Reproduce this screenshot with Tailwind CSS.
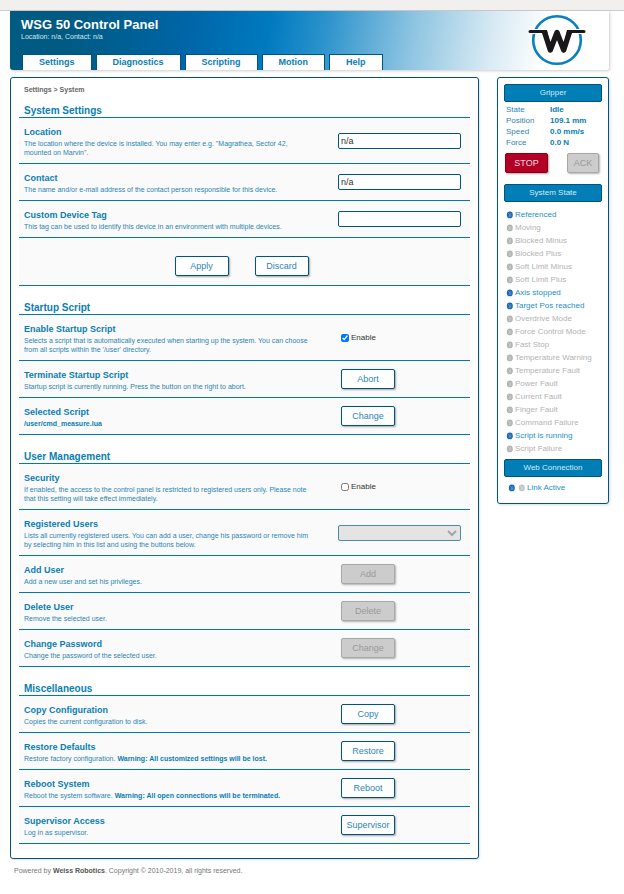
<!DOCTYPE html>
<html lang="en">
<head>
<meta charset="utf-8">
<title>WSG 50 Control Panel</title>
<script src="https://cdn.jsdelivr.net/npm/@tailwindcss/browser@4"></script>
</head>
<body class="bg-white font-['Liberation_Sans',Arial,sans-serif] text-[7px] leading-[9px] text-[#2b85b5]">
<svg class="hidden">
  <symbol id="dot" viewBox="0 0 7 8">
    <ellipse cx="3.8" cy="3.9" rx="3" ry="3.4" fill="currentColor"/>
    <path d="M2.200 2.200L4.200 4L2.800 6" fill="none" stroke="#fff" stroke-opacity=".4" stroke-width=".9"/>
    <path d="M4.8 1.8V6.2" fill="none" stroke="#fff" stroke-opacity=".3" stroke-width=".7"/>
  </symbol>
</svg>
<div class="h-[11px] border-b border-[#cfcdcb] bg-[#f2f0ee]"></div>
<div class="pl-[10px] pr-[15px]">
  <header class="flex h-[59px] justify-between rounded-b-[3px] bg-[linear-gradient(100deg,#005a82_0%,#005a82_10%,#0066a8_30%,#007abf_43%,#2b92cc_52%,#8fc5e2_67%,#d8eaf4_80%,#ffffff_89%)] shadow-[1px_1px_3px_rgba(0,0,0,0.2)]">
    <div class="flex flex-col justify-between pl-[11px]">
      <div class="pt-[6px] text-white">
        <h1 class="text-[13px] leading-[15px] font-bold">WSG 50 Control Panel</h1>
        <p class="text-[#d5e6f0]">Location: n/a, Contact: n/a</p>
      </div>
      <nav class="flex gap-1 pl-[1px] text-[9px] leading-[15px] font-bold text-[#0a7db4]">
        <a href="#" class="border-t border-r border-l border-[#005580] bg-white px-4">Settings</a>
        <a href="#" class="border-t border-r border-l border-[#005580] bg-white px-4">Diagnostics</a>
        <a href="#" class="border-t border-r border-l border-[#005580] bg-white px-4">Scripting</a>
        <a href="#" class="border-t border-r border-l border-[#005580] bg-white px-4">Motion</a>
        <a href="#" class="border-t border-r border-l border-[#005580] bg-white px-4">Help</a>
      </nav>
    </div>
    <svg class="mt-[3px] mr-[22px] h-[52px] w-[60px]" viewBox="0 0 60 52" aria-label="Weiss Robotics">
      <circle cx="30" cy="26" r="23.8" fill="none" stroke="#0a80c0" stroke-width="2.6"/>
      <path d="M2 17.5H58" stroke="#fff" stroke-width="5"/>
      <path d="M3 17.5H18M42 17.5H57" stroke="#1a171b" stroke-width="3" stroke-linecap="round"/>
      <path d="M17.500 18L23.3 36L30 18.500L36.700 36L42.500 18" fill="none" stroke="#1a171b" stroke-width="5.4" stroke-linejoin="round"/>
      <path d="M14 16H20L24 34H22ZM46 16H40L36 34H38Z" fill="#1a171b"/>
    </svg>
  </header>

  <div class="mt-[7px] flex items-start gap-[18px]">
    <main class="min-w-0 flex-1 rounded-[3px] border border-[#005580] bg-white px-2 pb-[14px] shadow-[1px_1px_2px_rgba(0,0,0,0.12)]">
      <p class="pt-[7px] pl-[5px] font-bold text-[#666]">Settings &gt; System</p>

      <section>
        <h2 class="mt-[10px] border-b border-[#007aad] pl-[5px] text-[10px] leading-[13px] font-bold text-[#0a7db4]">System Settings</h2>
        <div class="grid grid-cols-[1fr_132px] items-center border-b border-[#007aad] bg-[#fafafa]">
          <div class="pt-2 pr-6 pb-[6px] pl-[5px]"><h3 class="mb-px text-[9px] leading-[12px] font-bold text-[#0a7db4]"><label for="loc">Location</label></h3><p>The location where the device is installed. You may enter e.g. "Magrathea, Sector 42, mounted on Marvin".</p></div>
          <input id="loc" value="n/a" class="h-4 w-[123px] rounded-[2px] border border-[#005580] bg-white px-[2px] text-[9px] text-[#333]">
        </div>
        <div class="grid grid-cols-[1fr_132px] items-center border-b border-[#007aad] bg-[#fafafa]">
          <div class="pt-2 pr-6 pb-[6px] pl-[5px]"><h3 class="mb-px text-[9px] leading-[12px] font-bold text-[#0a7db4]"><label for="con">Contact</label></h3><p>The name and/or e-mail address of the contact person responsible for this device.</p></div>
          <input id="con" value="n/a" class="h-4 w-[123px] rounded-[2px] border border-[#005580] bg-white px-[2px] text-[9px] text-[#333]">
        </div>
        <div class="grid grid-cols-[1fr_132px] items-center border-b border-[#007aad] bg-[#fafafa]">
          <div class="pt-2 pr-6 pb-[6px] pl-[5px]"><h3 class="mb-px text-[9px] leading-[12px] font-bold text-[#0a7db4]"><label for="tag">Custom Device Tag</label></h3><p>This tag can be used to identify this device in an environment with multiple devices.</p></div>
          <input id="tag" class="h-4 w-[123px] rounded-[2px] border border-[#005580] bg-white px-[2px] text-[9px] text-[#333]">
        </div>
        <div class="flex justify-center gap-[26px] border-b border-[#007aad] bg-[#fafafa] pt-[18px] pr-[6px] pb-[9px]">
          <button class="h-5 w-[54px] rounded-[2px] border border-[#005580] bg-white text-[9px] shadow-[1px_1px_2px_rgba(0,0,0,0.35)]">Apply</button>
          <button class="h-5 w-[54px] rounded-[2px] border border-[#005580] bg-white text-[9px] shadow-[1px_1px_2px_rgba(0,0,0,0.35)]">Discard</button>
        </div>
      </section>

      <section>
        <h2 class="mt-[15px] border-b border-[#007aad] pl-[5px] text-[10px] leading-[13px] font-bold text-[#0a7db4]">Startup Script</h2>
        <div class="grid grid-cols-[1fr_132px] items-center border-b border-[#007aad] bg-[#fafafa]">
          <div class="pt-2 pr-6 pb-[6px] pl-[5px]"><h3 class="mb-px text-[9px] leading-[12px] font-bold text-[#0a7db4]">Enable Startup Script</h3><p>Selects a script that is automatically executed when starting up the system. You can choose from all scripts within the '/user' directory.</p></div>
          <label class="flex items-center gap-[2px] pl-[3px] text-[8px] text-[#333]"><input type="checkbox" checked class="size-2">Enable</label>
        </div>
        <div class="grid grid-cols-[1fr_132px] items-center border-b border-[#007aad] bg-[#fafafa]">
          <div class="pt-2 pr-6 pb-[6px] pl-[5px]"><h3 class="mb-px text-[9px] leading-[12px] font-bold text-[#0a7db4]">Terminate Startup Script</h3><p>Startup script is currently running. Press the button on the right to abort.</p></div>
          <button class="ml-[3px] h-5 w-[54px] rounded-[2px] border border-[#005580] bg-white text-[9px] shadow-[1px_1px_2px_rgba(0,0,0,0.35)]">Abort</button>
        </div>
        <div class="grid grid-cols-[1fr_132px] items-center border-b border-[#007aad] bg-[#fafafa]">
          <div class="pt-2 pr-6 pb-[6px] pl-[5px]"><h3 class="mb-px text-[9px] leading-[12px] font-bold text-[#0a7db4]">Selected Script</h3><p class="font-bold text-[#0a7db4]">/user/cmd_measure.lua</p></div>
          <button class="ml-[3px] h-5 w-[54px] rounded-[2px] border border-[#005580] bg-white text-[9px] shadow-[1px_1px_2px_rgba(0,0,0,0.35)]">Change</button>
        </div>
      </section>

      <section>
        <h2 class="mt-[15px] border-b border-[#007aad] pl-[5px] text-[10px] leading-[13px] font-bold text-[#0a7db4]">User Management</h2>
        <div class="grid grid-cols-[1fr_132px] items-center border-b border-[#007aad] bg-[#fafafa]">
          <div class="pt-2 pr-6 pb-[6px] pl-[5px]"><h3 class="mb-px text-[9px] leading-[12px] font-bold text-[#0a7db4]">Security</h3><p>If enabled, the access to the control panel is restricted to registered users only. Please note that this setting will take effect immediately.</p></div>
          <label class="flex items-center gap-[2px] pl-[3px] text-[8px] text-[#333]"><input type="checkbox" class="size-2">Enable</label>
        </div>
        <div class="grid grid-cols-[1fr_132px] items-center border-b border-[#007aad] bg-[#fafafa]">
          <div class="pt-2 pr-6 pb-[6px] pl-[5px]"><h3 class="mb-px text-[9px] leading-[12px] font-bold text-[#0a7db4]"><label for="users">Registered Users</label></h3><p>Lists all currently registered users. You can add a user, change his password or remove him by selecting him in this list and using the buttons below.</p></div>
          <div class="relative w-[123px]">
            <select id="users" disabled class="block h-4 w-full appearance-none rounded-[2px] border border-[#4c8bab] bg-[#e4e4e4] text-[9px]"></select>
            <svg class="absolute top-[5px] right-1 h-[7px] w-[10px]" viewBox="0 0 10 7"><path d="M1 1L5 5L9 1" fill="none" stroke="#a3a3a3" stroke-width="2"/></svg>
          </div>
        </div>
        <div class="grid grid-cols-[1fr_132px] items-center border-b border-[#007aad] bg-[#fafafa]">
          <div class="pt-2 pr-6 pb-[6px] pl-[5px]"><h3 class="mb-px text-[9px] leading-[12px] font-bold text-[#0a7db4]">Add User</h3><p>Add a new user and set his privileges.</p></div>
          <button disabled class="ml-[3px] h-5 w-[54px] rounded-[2px] border border-[#a8a8a8] bg-[#cccccc] text-[9px] text-[#999] shadow-[1px_1px_2px_rgba(0,0,0,0.3)]">Add</button>
        </div>
        <div class="grid grid-cols-[1fr_132px] items-center border-b border-[#007aad] bg-[#fafafa]">
          <div class="pt-2 pr-6 pb-[6px] pl-[5px]"><h3 class="mb-px text-[9px] leading-[12px] font-bold text-[#0a7db4]">Delete User</h3><p>Remove the selected user.</p></div>
          <button disabled class="ml-[3px] h-5 w-[54px] rounded-[2px] border border-[#a8a8a8] bg-[#cccccc] text-[9px] text-[#999] shadow-[1px_1px_2px_rgba(0,0,0,0.3)]">Delete</button>
        </div>
        <div class="grid grid-cols-[1fr_132px] items-center border-b border-[#007aad] bg-[#fafafa]">
          <div class="pt-2 pr-6 pb-[6px] pl-[5px]"><h3 class="mb-px text-[9px] leading-[12px] font-bold text-[#0a7db4]">Change Password</h3><p>Change the password of the selected user.</p></div>
          <button disabled class="ml-[3px] h-5 w-[54px] rounded-[2px] border border-[#a8a8a8] bg-[#cccccc] text-[9px] text-[#999] shadow-[1px_1px_2px_rgba(0,0,0,0.3)]">Change</button>
        </div>
      </section>

      <section>
        <h2 class="mt-[15px] border-b border-[#007aad] pl-[5px] text-[10px] leading-[13px] font-bold text-[#0a7db4]">Miscellaneous</h2>
        <div class="grid grid-cols-[1fr_132px] items-center border-b border-[#007aad] bg-[#fafafa]">
          <div class="pt-2 pr-6 pb-[6px] pl-[5px]"><h3 class="mb-px text-[9px] leading-[12px] font-bold text-[#0a7db4]">Copy Configuration</h3><p>Copies the current configuration to disk.</p></div>
          <button class="ml-[3px] h-5 w-[54px] rounded-[2px] border border-[#005580] bg-white text-[9px] shadow-[1px_1px_2px_rgba(0,0,0,0.35)]">Copy</button>
        </div>
        <div class="grid grid-cols-[1fr_132px] items-center border-b border-[#007aad] bg-[#fafafa]">
          <div class="pt-2 pr-6 pb-[6px] pl-[5px]"><h3 class="mb-px text-[9px] leading-[12px] font-bold text-[#0a7db4]">Restore Defaults</h3><p>Restore factory configuration. <b class="text-[#0a7db4]">Warning: All customized settings will be lost.</b></p></div>
          <button class="ml-[3px] h-5 w-[54px] rounded-[2px] border border-[#005580] bg-white text-[9px] shadow-[1px_1px_2px_rgba(0,0,0,0.35)]">Restore</button>
        </div>
        <div class="grid grid-cols-[1fr_132px] items-center border-b border-[#007aad] bg-[#fafafa]">
          <div class="pt-2 pr-6 pb-[6px] pl-[5px]"><h3 class="mb-px text-[9px] leading-[12px] font-bold text-[#0a7db4]">Reboot System</h3><p>Reboot the system software. <b class="text-[#0a7db4]">Warning: All open connections will be terminated.</b></p></div>
          <button class="ml-[3px] h-5 w-[54px] rounded-[2px] border border-[#005580] bg-white text-[9px] shadow-[1px_1px_2px_rgba(0,0,0,0.35)]">Reboot</button>
        </div>
        <div class="grid grid-cols-[1fr_132px] items-center border-b border-[#007aad] bg-[#fafafa]">
          <div class="pt-2 pr-6 pb-[6px] pl-[5px]"><h3 class="mb-px text-[9px] leading-[12px] font-bold text-[#0a7db4]">Supervisor Access</h3><p>Log in as supervisor.</p></div>
          <button class="ml-[3px] h-5 w-[54px] rounded-[2px] border border-[#005580] bg-white text-[9px] shadow-[1px_1px_2px_rgba(0,0,0,0.35)]">Supervisor</button>
        </div>
      </section>
    </main>

    <aside class="w-28 shrink-0 rounded-[3px] border border-[#005580] bg-white px-[6px] pt-[6px] pb-[9px] text-[8px] shadow-[1px_1px_3px_rgba(0,0,0,0.15)]">
      <h2 class="rounded-[2px] border border-[#005580] bg-[#007eb5] text-center leading-[16px] text-[#d5eaf5]">Gripper</h2>
      <dl class="mt-[2px] grid grid-cols-[44px_1fr] pl-[2px] leading-[11px]">
        <dt>State</dt><dd class="font-bold text-[#0a7db4]">Idle</dd>
        <dt>Position</dt><dd class="font-bold text-[#0a7db4]">109.1 mm</dd>
        <dt>Speed</dt><dd class="font-bold text-[#0a7db4]">0.0 mm/s</dd>
        <dt>Force</dt><dd class="font-bold text-[#0a7db4]">0.0 N</dd>
      </dl>
      <div class="mt-[5px] flex justify-between pr-[3px] pl-px text-[9px]">
        <button class="h-5 w-[43px] rounded-[2px] border border-[#8c0018] bg-[#b40024] text-[#f3dde1] shadow-[1px_1px_2px_rgba(0,0,0,0.35)]">STOP</button>
        <button disabled class="h-5 w-8 rounded-[2px] border border-[#a8a8a8] bg-[#cccccc] text-[#999] shadow-[1px_1px_2px_rgba(0,0,0,0.3)]">ACK</button>
      </div>
      <h2 class="mt-[11px] rounded-[2px] border border-[#005580] bg-[#007eb5] text-center leading-[16px] text-[#d5eaf5]">System State</h2>
      <ul class="mt-[6px] pl-[2px] leading-[13px] text-[#b3b3b3]">
        <li class="flex items-center gap-[2px] text-[#1c8fc9]"><svg class="h-2 w-[7px] text-[#1a66b4]"><use href="#dot"/></svg>Referenced</li>
        <li class="flex items-center gap-[2px]"><svg class="h-2 w-[7px]"><use href="#dot"/></svg>Moving</li>
        <li class="flex items-center gap-[2px]"><svg class="h-2 w-[7px]"><use href="#dot"/></svg>Blocked Minus</li>
        <li class="flex items-center gap-[2px]"><svg class="h-2 w-[7px]"><use href="#dot"/></svg>Blocked Plus</li>
        <li class="flex items-center gap-[2px]"><svg class="h-2 w-[7px]"><use href="#dot"/></svg>Soft Limit Minus</li>
        <li class="flex items-center gap-[2px]"><svg class="h-2 w-[7px]"><use href="#dot"/></svg>Soft Limit Plus</li>
        <li class="flex items-center gap-[2px] text-[#1c8fc9]"><svg class="h-2 w-[7px] text-[#1a66b4]"><use href="#dot"/></svg>Axis stopped</li>
        <li class="flex items-center gap-[2px] text-[#1c8fc9]"><svg class="h-2 w-[7px] text-[#1a66b4]"><use href="#dot"/></svg>Target Pos reached</li>
        <li class="flex items-center gap-[2px]"><svg class="h-2 w-[7px]"><use href="#dot"/></svg>Overdrive Mode</li>
        <li class="flex items-center gap-[2px]"><svg class="h-2 w-[7px]"><use href="#dot"/></svg>Force Control Mode</li>
        <li class="flex items-center gap-[2px]"><svg class="h-2 w-[7px]"><use href="#dot"/></svg>Fast Stop</li>
        <li class="flex items-center gap-[2px]"><svg class="h-2 w-[7px]"><use href="#dot"/></svg>Temperature Warning</li>
        <li class="flex items-center gap-[2px]"><svg class="h-2 w-[7px]"><use href="#dot"/></svg>Temperature Fault</li>
        <li class="flex items-center gap-[2px]"><svg class="h-2 w-[7px]"><use href="#dot"/></svg>Power Fault</li>
        <li class="flex items-center gap-[2px]"><svg class="h-2 w-[7px]"><use href="#dot"/></svg>Current Fault</li>
        <li class="flex items-center gap-[2px]"><svg class="h-2 w-[7px]"><use href="#dot"/></svg>Finger Fault</li>
        <li class="flex items-center gap-[2px]"><svg class="h-2 w-[7px]"><use href="#dot"/></svg>Command Failure</li>
        <li class="flex items-center gap-[2px] text-[#1c8fc9]"><svg class="h-2 w-[7px] text-[#1a66b4]"><use href="#dot"/></svg>Script is running</li>
        <li class="flex items-center gap-[2px]"><svg class="h-2 w-[7px]"><use href="#dot"/></svg>Script Failure</li>
      </ul>
      <h2 class="mt-[4px] rounded-[2px] border border-[#005580] bg-[#007eb5] text-center leading-[16px] text-[#d5eaf5]">Web Connection</h2>
      <p class="mt-[4px] flex items-center gap-[2px] pl-1 leading-[13px] text-[#1c8fc9]"><svg class="h-2 w-[7px] text-[#1a66b4]"><use href="#dot"/></svg><svg class="ml-px h-2 w-[7px] text-[#c4c4c4]"><use href="#dot"/></svg>Link Active</p>
    </aside>
  </div>
  <footer class="pt-[7px] pl-1 text-[#777]">Powered by <b class="text-[#555]">Weiss Robotics</b>. Copyright © 2010-2019, all rights reserved.</footer>
</div>
</body>
</html>
